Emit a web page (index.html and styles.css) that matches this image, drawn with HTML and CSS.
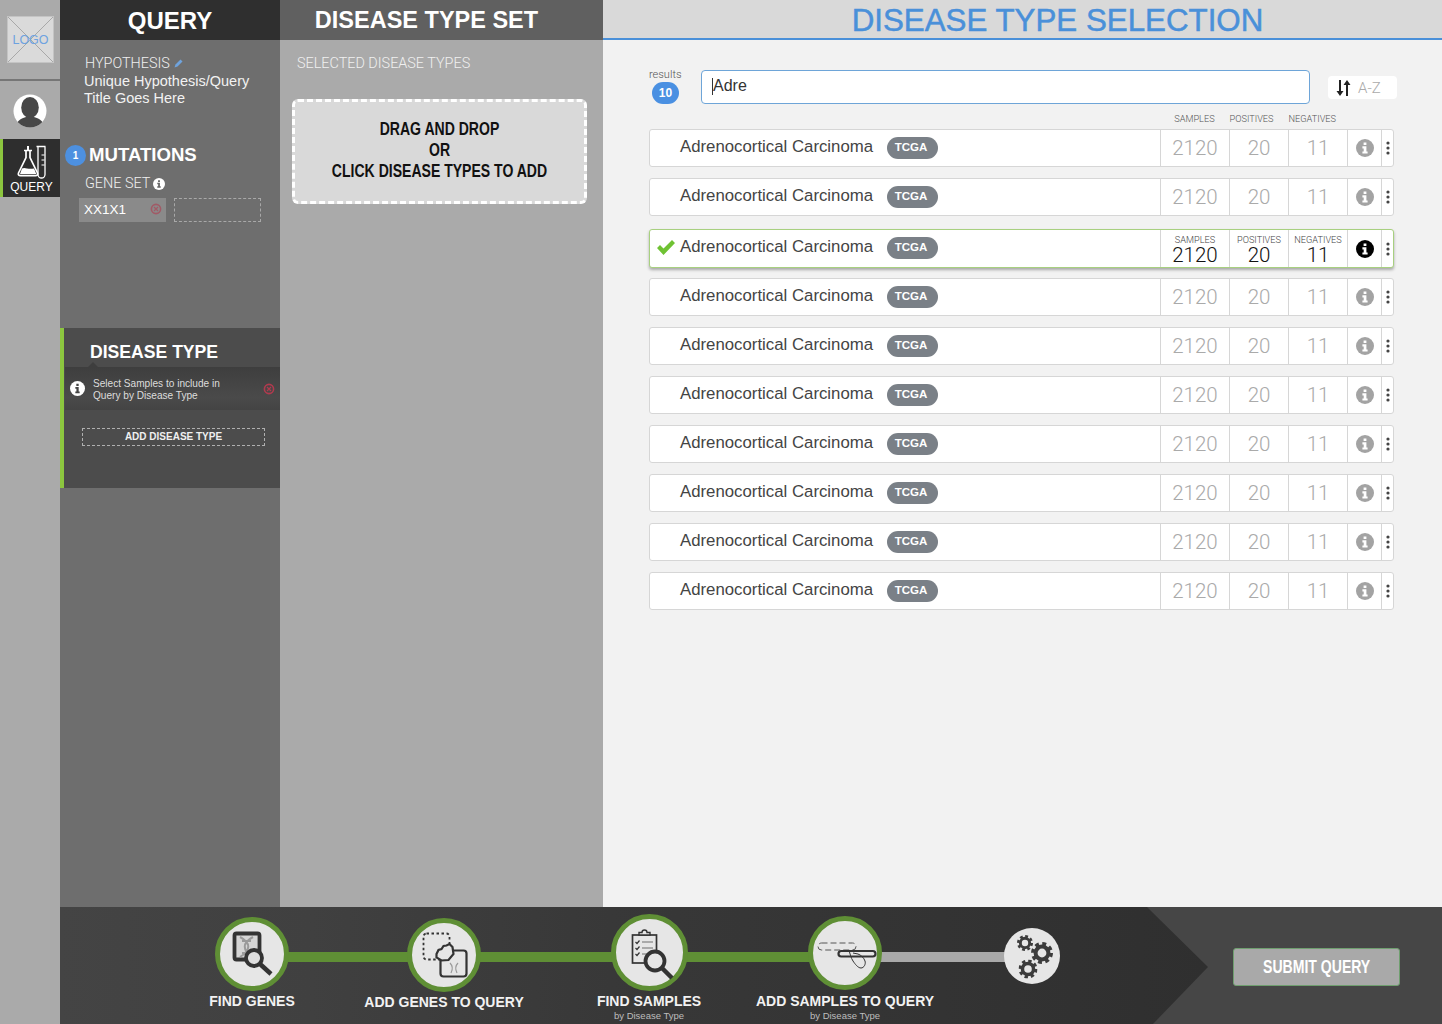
FILE: index.html
```html
<!DOCTYPE html>
<html lang="en">
<head>
<meta charset="utf-8">
<title>Disease Type Selection</title>
<link rel="stylesheet" href="styles.css">
</head>
<body>
<svg class="defs" aria-hidden="true">
  <symbol id="info" viewBox="0 0 18 18">
    <circle cx="9" cy="9" r="9" fill="currentColor"/>
    <path class="info-glyph" d="M7.6 3.4h2.8v2.5H7.6zM6.4 7.3h4v5.2h1.2v2.1H6.4v-2.1h1.3V9.4H6.4z"/>
  </symbol>
  <symbol id="kebab" viewBox="0 0 4 14">
    <circle cx="2" cy="2" r="1.6"/><circle cx="2" cy="7" r="1.6"/><circle cx="2" cy="12" r="1.6"/>
  </symbol>
  <symbol id="remove" viewBox="0 0 12 12">
    <circle cx="6" cy="6" r="4.6" fill="none" stroke="currentColor" stroke-width="1.6"/>
    <path d="M4 4l4 4M8 4l-4 4" stroke="currentColor" stroke-width="1.2"/>
  </symbol>
  <symbol id="gear" viewBox="0 0 24 24">
    <circle cx="12" cy="12" r="7" fill="none" stroke="#3c3c3c" stroke-width="4.400"/>
    <circle cx="12" cy="12" r="10" fill="none" stroke="#3c3c3c" stroke-width="4" stroke-dasharray="4.2 3.65"/>
  </symbol>
</svg>

<div class="app">
  <nav class="rail">
    <div class="logo">
      <svg class="logo-x" viewBox="0 0 47 47"><path d="M0 0l47 47M47 0L0 47" stroke="#a5a5a5" stroke-width="1"/></svg>
      <span class="logo-text">LOGO</span>
    </div>
    <div class="rail-avatar">
      <svg width="34" height="34" viewBox="0 0 34 34">
        <circle cx="17" cy="17" r="16.5" fill="#fff"/>
        <clipPath id="avatar-clip"><circle cx="17" cy="17" r="16.5"/></clipPath>
        <g clip-path="url(#avatar-clip)" fill="#474747">
          <ellipse cx="17" cy="13.5" rx="8.8" ry="10.500"/>
          <path d="M3 34c0-7 4-9 10-11h8c6 2 10 4 10 11z"/>
        </g>
      </svg>
    </div>
    <div class="rail-tile">
      <svg width="30" height="35" viewBox="0 0 30 35" fill="none" stroke="#fff">
        <path d="M19.5 1.5h9M21 1.500v28a3.500 3.500 0 0 0 7 0v-28" stroke-width="1.300"/>
        <path d="M24.500 10h3M24.500 15h3M24.500 20h3" stroke-width="1"/>
        <path d="M7 5.500h8M9 5.500v7L1.500 28c-.6 1.500.3 2.700 2 2.700h15c1.700 0 2.600-1.200 2-2.700L13 12.500v-7" stroke-width="1.700"/>
        <path d="M5 23.500c3-1.800 5 1 12 0l2.300 5.500H3z" fill="#fff" stroke="none"/>
        <path d="M11 1v4" stroke-width="2"/>
      </svg>
      <span class="rail-tile-label">QUERY</span>
    </div>
  </nav>

  <aside class="query-panel">
    <h2 class="panel-head panel-head-dark">QUERY</h2>
    <section class="hypothesis">
      <div class="light-label">HYPOTHESIS
        <svg class="pencil" width="9" height="9" viewBox="0 0 9 9"><path d="M0.500 8.500l1-3L6.500.5l2 2-5 5z" fill="#6fa3dd"/></svg>
      </div>
      <p class="hypothesis-title">Unique Hypothesis/Query<br>Title Goes Here</p>
    </section>
    <section class="mutations">
      <div class="mutations-head"><span class="step-dot">1</span><h3 class="section-title">MUTATIONS</h3></div>
      <div class="light-label gene-label">GENE SET<svg class="gene-info"><use href="#info"/></svg></div>
      <div class="gene-row">
        <div class="gene-chip"><span>XX1X1</span><svg class="remove-dim"><use href="#remove"/></svg></div>
        <div class="gene-empty"></div>
      </div>
    </section>
    <section class="disease">
      <h3 class="section-title disease-title">DISEASE TYPE</h3>
      <div class="tip">
        <svg class="tip-info"><use href="#info"/></svg>
        <p class="tip-text">Select Samples to include in<br>Query by Disease Type</p>
        <svg class="tip-remove"><use href="#remove"/></svg>
      </div>
      <div class="add-disease">ADD DISEASE TYPE</div>
    </section>
  </aside>

  <aside class="set-panel">
    <h2 class="panel-head panel-head-mid">DISEASE TYPE SET</h2>
    <div class="light-label set-label">SELECTED DISEASE TYPES</div>
    <div class="dropzone"><div class="dropzone-text">DRAG AND DROP<br>OR<br>CLICK DISEASE TYPES TO ADD</div></div>
  </aside>

  <main class="main">
    <h1 class="main-title">DISEASE TYPE SELECTION</h1>
    <div class="main-body">
      <div class="search-row">
        <div class="results"><span class="results-label">results</span><span class="results-badge">10</span></div>
        <div class="search-box"><span class="caret"></span>Adre</div>
        <div class="sort">
          <svg width="15" height="16" viewBox="0 0 15 16"><path d="M3 0h2v11h2.500L4 16 .5 11H3zM10 16h2V5h2.500L11 0 7.500 5H10z" fill="#222"/></svg>
          <span>A-Z</span>
        </div>
      </div>
      <div class="col-heads"><span class="ch-s">SAMPLES</span><span class="ch-p">POSITIVES</span><span class="ch-n">NEGATIVES</span></div>
      <div class="rows">
        <div class="row"><div class="name">Adrenocortical Carcinoma<span class="tag">TCGA</span></div><div class="num"><b>2120</b></div><div class="num"><b>20</b></div><div class="num"><b>11</b></div><div class="info"><svg><use href="#info"/></svg></div><div class="more"><svg><use href="#kebab"/></svg></div></div>
        <div class="row"><div class="name">Adrenocortical Carcinoma<span class="tag">TCGA</span></div><div class="num"><b>2120</b></div><div class="num"><b>20</b></div><div class="num"><b>11</b></div><div class="info"><svg><use href="#info"/></svg></div><div class="more"><svg><use href="#kebab"/></svg></div></div>
        <div class="row row-selected">
          <div class="name"><svg class="check" width="18" height="15" viewBox="0 0 18 15"><path d="M0 8l3-3 3.500 3.500L15 0l3 3L6.500 15z" fill="#6fc233"/></svg>Adrenocortical Carcinoma<span class="tag">TCGA</span></div>
          <div class="num"><small>SAMPLES</small><b>2120</b></div><div class="num"><small>POSITIVES</small><b>20</b></div><div class="num"><small>NEGATIVES</small><b>11</b></div><div class="info"><svg><use href="#info"/></svg></div><div class="more"><svg><use href="#kebab"/></svg></div>
        </div>
        <div class="row"><div class="name">Adrenocortical Carcinoma<span class="tag">TCGA</span></div><div class="num"><b>2120</b></div><div class="num"><b>20</b></div><div class="num"><b>11</b></div><div class="info"><svg><use href="#info"/></svg></div><div class="more"><svg><use href="#kebab"/></svg></div></div>
        <div class="row"><div class="name">Adrenocortical Carcinoma<span class="tag">TCGA</span></div><div class="num"><b>2120</b></div><div class="num"><b>20</b></div><div class="num"><b>11</b></div><div class="info"><svg><use href="#info"/></svg></div><div class="more"><svg><use href="#kebab"/></svg></div></div>
        <div class="row"><div class="name">Adrenocortical Carcinoma<span class="tag">TCGA</span></div><div class="num"><b>2120</b></div><div class="num"><b>20</b></div><div class="num"><b>11</b></div><div class="info"><svg><use href="#info"/></svg></div><div class="more"><svg><use href="#kebab"/></svg></div></div>
        <div class="row"><div class="name">Adrenocortical Carcinoma<span class="tag">TCGA</span></div><div class="num"><b>2120</b></div><div class="num"><b>20</b></div><div class="num"><b>11</b></div><div class="info"><svg><use href="#info"/></svg></div><div class="more"><svg><use href="#kebab"/></svg></div></div>
        <div class="row"><div class="name">Adrenocortical Carcinoma<span class="tag">TCGA</span></div><div class="num"><b>2120</b></div><div class="num"><b>20</b></div><div class="num"><b>11</b></div><div class="info"><svg><use href="#info"/></svg></div><div class="more"><svg><use href="#kebab"/></svg></div></div>
        <div class="row"><div class="name">Adrenocortical Carcinoma<span class="tag">TCGA</span></div><div class="num"><b>2120</b></div><div class="num"><b>20</b></div><div class="num"><b>11</b></div><div class="info"><svg><use href="#info"/></svg></div><div class="more"><svg><use href="#kebab"/></svg></div></div>
        <div class="row"><div class="name">Adrenocortical Carcinoma<span class="tag">TCGA</span></div><div class="num"><b>2120</b></div><div class="num"><b>20</b></div><div class="num"><b>11</b></div><div class="info"><svg><use href="#info"/></svg></div><div class="more"><svg><use href="#kebab"/></svg></div></div>
      </div>
    </div>
  </main>

  <footer class="bar">
    <div class="bar-arrow"></div>
    <div class="link link-done"></div>
    <div class="link link-todo"></div>
    <div class="steps">
      <div class="step step-1">
        <div class="node">
          <svg width="64" height="64" viewBox="5 5 64 64" fill="none" stroke="#333">
            <rect x="19.500" y="16.500" width="25" height="26" rx="2" stroke-width="3.800" fill="#d5d5d5"/>
            <path d="M25 20c11 6 11 13 0 20M38 20c-11 6-11 13 0 20M27 24h9M27 36h9" stroke="#9a9a9a" stroke-width="2"/>
            <circle cx="39" cy="41" r="8" stroke-width="3.800" fill="#dedede"/>
            <path d="M45 47l11 10" stroke-width="4.500"/>
          </svg>
        </div>
        <div class="step-name">FIND GENES</div>
      </div>
      <div class="step step-2">
        <div class="node">
          <svg width="64" height="64" viewBox="5 5 64 64" fill="none" stroke="#333">
            <rect x="16.500" y="15.500" width="26" height="26" rx="3" stroke-width="1.800" stroke-dasharray="2.500 2.500"/>
            <rect x="33.500" y="32.500" width="26" height="26" rx="3" stroke-width="2.200"/>
            <path d="M43 45c3 3 3 6 1 10M51 45c-3 3-3 6-1 10" stroke="#999" stroke-width="1.200"/>
            <path d="M29.500 36l2-4 3-1 2-3 3-.5 3-1.500 3 3 1 7-5 6-7 .5-5-3z" fill="#e6e6e6" stroke-width="2.200"/>
          </svg>
        </div>
        <div class="step-name">ADD GENES TO QUERY</div>
      </div>
      <div class="step step-3">
        <div class="node">
          <svg width="67" height="67" viewBox="5 5 67 67" fill="none" stroke="#333">
            <rect x="21.500" y="21" width="24" height="28" stroke-width="1.700"/>
            <path d="M28 21v-2.500h3a2.500 2.500 0 0 1 5 0h3V21z" fill="#e6e6e6" stroke-width="1.400"/>
            <path d="M24.500 28l1.500 1.500 2.500-3M24.500 34l1.500 1.500 2.500-3M24.500 40l1.500 1.500 2.500-3" stroke-width="1.200"/>
            <path d="M31 28h11M31 34h11M31 40h8" stroke="#aaa" stroke-width="2"/>
            <circle cx="44" cy="47" r="9.500" stroke-width="3.800" fill="#e6e6e6"/>
            <path d="M51 54l10 10" stroke-width="4.500"/>
          </svg>
        </div>
        <div class="step-name">FIND SAMPLES</div>
        <div class="step-sub">by Disease Type</div>
      </div>
      <div class="step step-4">
        <div class="node">
          <svg width="64" height="64" viewBox="5 5 64 64" fill="none" stroke="#333">
            <rect x="10" y="27" width="38" height="7" rx="3.500" stroke="#555" stroke-width="1" stroke-dasharray="6 3"/>
            <path d="M41 34c1 4 2 8 4 11s5 7 8 7 5-4 4-7-4-6-7-7l-5-1" fill="#e6e6e6" stroke-width="1"/>
            <rect x="30.500" y="35" width="37" height="5.500" rx="2.700" stroke-width="2.200"/>
          </svg>
        </div>
        <div class="step-name">ADD SAMPLES TO QUERY</div>
        <div class="step-sub">by Disease Type</div>
      </div>
      <div class="step step-5">
        <div class="node node-todo">
          <svg class="gears" width="56" height="56" viewBox="0 0 56 56">
            <use href="#gear" x="13" y="7" width="16" height="16"/>
            <use href="#gear" x="27" y="14" width="22" height="22"/>
            <use href="#gear" x="14.500" y="31.500" width="19" height="19"/>
          </svg>
        </div>
      </div>
    </div>
    <button class="submit" type="button"><span class="submit-text">SUBMIT QUERY</span></button>
  </footer>
</div>
</body>
</html>
```

FILE: styles.css
```css
* { box-sizing: border-box; }
html, body { margin: 0; padding: 0; }
body {
  width: 1442px;
  height: 1024px;
  overflow: hidden;
  font-family: "Liberation Sans", Arial, sans-serif;
  color: #444;
  background: #f2f2f2;
}
.defs { position: absolute; width: 0; height: 0; overflow: hidden; }
h1, h2, h3, p { margin: 0; }

.app {
  display: grid;
  grid-template-columns: 60px 220px 323px 839px;
  grid-template-rows: 907px 117px;
  width: 1442px;
  height: 1024px;
}

/* rail */
.rail {
  grid-row: 1 / 3;
  grid-column: 1;
  background: #aaaaaa;
  display: flex;
  flex-direction: column;
  align-items: stretch;
}
.logo {
  position: relative;
  width: 47px;
  height: 47px;
  margin: 16px 0 0 7px;
  background: #dadada;
  border: 1px solid #c4c4c4;
  display: flex;
  align-items: center;
  justify-content: center;
}
.logo-x { position: absolute; inset: 0; width: 100%; height: 100%; }
.logo-text { position: relative; color: #6da2e0; font-size: 12.500px; }
.rail-avatar {
  margin-top: 16px;
  height: 60px;
  border-top: 2px solid #767676;
  display: flex;
  justify-content: center;
  padding-top: 13px;
}
.rail-tile {
  height: 58px;
  background: #2e2e2e;
  border-left: 3px solid #8cc63f;
  display: flex;
  flex-direction: column;
  align-items: center;
  padding-top: 6px;
}
.rail-tile-label { color: #fff; font-size: 12px; }

/* panel heads */
.panel-head {
  height: 40px;
  line-height: 41px;
  color: #fff;
  font-size: 24px;
  font-weight: 700;
  text-align: center;
}
.panel-head-dark { background: #2f2f2f; }
.panel-head-mid { background: #606060; padding-right: 30px; font-size: 23.500px; }

.light-label {
  font-family: Roboto, "Liberation Sans", sans-serif;
  font-weight: 300;
  color: #f0f0f0;
  font-size: 14.400px;
  line-height: 16px;
}

/* query panel */
.query-panel {
  grid-row: 1;
  grid-column: 2;
  background: #6e6e6e;
  display: flex;
  flex-direction: column;
}
.hypothesis { padding: 16px 0 0 24px; height: 100px; }
.hypothesis .light-label { padding-left: 1px; }
.pencil { margin-left: 1px; }
.hypothesis-title { color: #f2f2f2; font-size: 14.500px; line-height: 17px; margin-top: 1px; }
.mutations { height: 188px; padding: 4px 0 0 5px; }
.mutations-head { display: flex; align-items: center; gap: 3px; height: 22px; }
.step-dot {
  width: 21px;
  height: 21px;
  border-radius: 50%;
  background: #4d90e0;
  color: #fff;
  font-size: 10px;
  font-weight: 700;
  display: flex;
  align-items: center;
  justify-content: center;
}
.section-title { color: #fff; font-size: 18.600px; font-weight: 700; line-height: 22px; }
.gene-label { display: flex; align-items: center; margin: 10px 0 0 20px; gap: 3px; }
.gene-info { width: 12px; height: 12px; color: #fff; --glyph: #666; }
.gene-row { display: flex; gap: 8px; margin: 6px 0 0 14px; }
.gene-chip {
  width: 87px;
  height: 24px;
  background: #8a8a8a;
  color: #fff;
  font-size: 13.500px;
  display: flex;
  align-items: center;
  justify-content: space-between;
  padding: 0 4px 2px 5px;
}
.remove-dim { width: 12px; height: 12px; color: #a15a66; }
.gene-empty { width: 87px; height: 24px; border: 1px dashed #a8a8a8; }
.disease {
  height: 160px;
  background: #4c4c4c;
  border-left: 4px solid #8cc63f;
  padding-top: 13px;
}
.disease-title { padding-left: 26px; font-size: 17.600px; }
.tip {
  position: relative;
  height: 43px;
  margin: 4px 0 0 1px;
  background: linear-gradient(#3e3e3e, #4a4a4a 70%, #444);
  display: flex;
  align-items: center;
  padding: 0 5px 0 5px;
}
.tip::before {
  content: "";
  position: absolute;
  left: 23px;
  top: -5px;
  border: 5px solid transparent;
  border-top: 0;
  border-bottom-color: #3e3e3e;
}
.tip-info { width: 15px; height: 15px; color: #fff; --glyph: #444; flex: none; }
.tip-text { flex: 1; color: #ddd; font-size: 10.100px; line-height: 12px; padding: 2px 0 0 8px; }
.tip-remove { width: 12px; height: 12px; color: #b03a4e; flex: none; }
.add-disease {
  margin: 18px 15px 0 18px;
  height: 18px;
  border: 1px dashed #b0b0b0;
  color: #f0f0f0;
  font-size: 10px;
  font-weight: 700;
  line-height: 15px;
  text-align: center;
}

/* set panel */
.set-panel {
  grid-row: 1;
  grid-column: 3;
  background: #aaaaaa;
}
.set-label { padding: 16px 0 0 17px; height: 59px; }
.dropzone {
  width: 295px;
  height: 105px;
  margin-left: 12px;
  background: #d9d9d9;
  border: 3px dashed #fff;
  border-radius: 6px;
  padding-top: 17px;
}
.dropzone-text {
  font-weight: 700;
  font-size: 18px;
  line-height: 21px;
  color: #111;
  text-align: center;
  transform: scaleX(.78);
  white-space: nowrap;
}

/* main */
.main {
  grid-row: 1;
  grid-column: 4;
  background: #f2f2f2;
}
.main-title {
  height: 40px;
  background: #d9d9d9;
  border-bottom: 2px solid #4a90d9;
  color: #4a90d9;
  font-size: 31.300px;
  font-weight: 400;
  line-height: 41px;
  text-align: center;
  padding-left: 70px;
  -webkit-text-stroke: 0.500px #4a90d9;
}
.main-body { padding: 30px 48px 0 46px; }
.search-row { display: flex; align-items: flex-start; height: 34px; }
.results {
  flex: none;
  width: 52px;
  display: flex;
  flex-direction: column;
  align-items: flex-start;
  margin-top: -2px;
}
.results-label { font-family: Roboto, sans-serif; font-weight: 300; font-size: 11px; line-height: 14px; color: #555; }
.results-badge {
  width: 27px;
  height: 22px;
  margin: 0 0 0 3px;
  border-radius: 11px;
  background: #4a90e2;
  color: #fff;
  font-size: 12px;
  font-weight: 700;
  line-height: 22px;
  text-align: center;
}
.search-box {
  flex: none;
  width: 609px;
  height: 34px;
  background: #fff;
  border: 1px solid #6ea5d8;
  border-radius: 4px;
  font-size: 16px;
  color: #333;
  padding: 0 0 2px 10px;
  display: flex;
  align-items: center;
}
.caret { width: 1px; height: 17px; background: #333; }
.sort {
  flex: none;
  width: 69px;
  height: 23px;
  margin: 6px 0 0 18px;
  background: #fff;
  border-radius: 4px;
  display: flex;
  align-items: center;
  gap: 7px;
  padding-left: 8px;
  color: #aaa;
  font-family: Roboto, sans-serif;
  font-weight: 300;
  font-size: 15px;
}
.col-heads {
  height: 25px;
  font-family: Roboto, sans-serif;
  font-weight: 300;
  font-size: 9.200px;
  color: #555;
  display: flex;
  justify-content: flex-end;
  padding: 9px 58px 0 0;
  gap: 15px;
  line-height: 11px;
}
.rows { display: flex; flex-direction: column; gap: 11px; }
.row {
  display: grid;
  grid-template-columns: 510px 69px 59px 59px 34px 12px;
  height: 38px;
  width: 745px;
  background: #fff;
  border: 1px solid #d6d6d6;
  border-radius: 3px;
}
.name {
  display: flex;
  align-items: center;
  padding: 0 0 3px 30px;
  position: relative;
  font-size: 16.800px;
  color: #444;
  white-space: nowrap;
}
.tag {
  display: inline-block;
  width: 51px;
  height: 22px;
  margin: 3px 0 0 14px;
  padding-right: 3px;
  border-radius: 11px;
  background: #7a8087;
  color: #fff;
  font-size: 11.500px;
  font-weight: 700;
  line-height: 21px;
  text-align: center;
}
.num {
  border-left: 1px solid #d6d6d6;
  display: flex;
  flex-direction: column;
  align-items: center;
  justify-content: center;
  font-family: Roboto, sans-serif;
  font-weight: 300;
  color: #aaa;
}
.num:first-of-type { border-left-width: 2px; }
.num b { font-weight: 300; font-size: 20.500px; line-height: 24px; }
.num small { font-size: 9.200px; line-height: 10px; color: #444; margin-bottom: 2px; }
.info {
  border-left: 1px solid #d6d6d6;
  display: flex;
  align-items: center;
  justify-content: center;
  color: #a3a3a3;
  --glyph: #fff;
}
.info svg { width: 18px; height: 18px; }
.info-glyph { fill: var(--glyph, #fff); }
.more {
  border-left: 1px solid #d6d6d6;
  display: flex;
  align-items: center;
  justify-content: center;
}
.more svg { width: 4px; height: 14px; fill: #444; }
.row-selected {
  height: 39px;
  margin: 2px 0 -1px;
  border-color: #a8d080;
  box-shadow: 0 2px 3px rgba(0, 0, 0, .3);
}
.row-selected .tag { margin-top: 2px; }
.row-selected .check { position: absolute; left: 7px; top: 10px; }
.row-selected .num { color: #111; }
.row-selected .num b { line-height: 16px; }
.row-selected .info { color: #000; --glyph: #fff; }

/* bottom bar */
.bar {
  grid-row: 2;
  grid-column: 2 / 5;
  position: relative;
  overflow: hidden;
  background: #464646;
  display: flex;
  align-items: flex-start;
}
.bar-arrow {
  position: absolute;
  left: 0;
  top: 0;
  width: 1148px;
  height: 117px;
  background: linear-gradient(90deg, #444 0, #404040 250px, #383838 550px, #2f2f2f 1148px);
  clip-path: polygon(0 0, 1087px 0, 1148px 60px, 1093px 117px, 0 117px);
}
.link { position: absolute; top: 45px; height: 10px; }
.link-done { left: 225px; width: 525px; background: #5f8f35; }
.link-todo { left: 820px; width: 130px; background: #a9a9a9; }
.steps {
  position: relative;
  display: grid;
  grid-template-columns: 196px 188px 222px 170px 204px;
  margin-left: 94px;
  height: 117px;
}
.step {
  display: flex;
  flex-direction: column;
  align-items: center;
  white-space: nowrap;
}
.node {
  width: 74px;
  height: 74px;
  border-radius: 50%;
  background: #e6e6e6;
  border: 5px solid #5f8f35;
  display: flex;
  align-items: center;
  justify-content: center;
  flex: none;
}
.step-1 .node { margin: 10px 0 2px; }
.step-2 .node { margin: 11px 0 2px; }
.step-3 .node { width: 77px; height: 77px; margin: 7px 0 2px; }
.step-4 .node { margin: 9px 0 3px; }
.step-5 .node { width: 56px; height: 56px; margin-top: 21px; border: 0; }
.step-name { color: #f2f2f2; font-size: 14px; font-weight: 700; line-height: 16px; }
.step-sub { color: #bdbdbd; font-size: 9.500px; line-height: 12px; margin-top: 1px; }
.submit {
  position: absolute;
  left: 1173px;
  top: 41px;
  width: 167px;
  height: 38px;
  background: #a9a9a9;
  border: 1px solid #6f9f6f;
  border-radius: 3px;
  color: #fff;
  font-family: "Liberation Sans", Arial, sans-serif;
  font-weight: 700;
  font-size: 18px;
  padding: 0;
}
.submit-text { display: inline-block; transform: scaleX(.78); white-space: nowrap; }
```
